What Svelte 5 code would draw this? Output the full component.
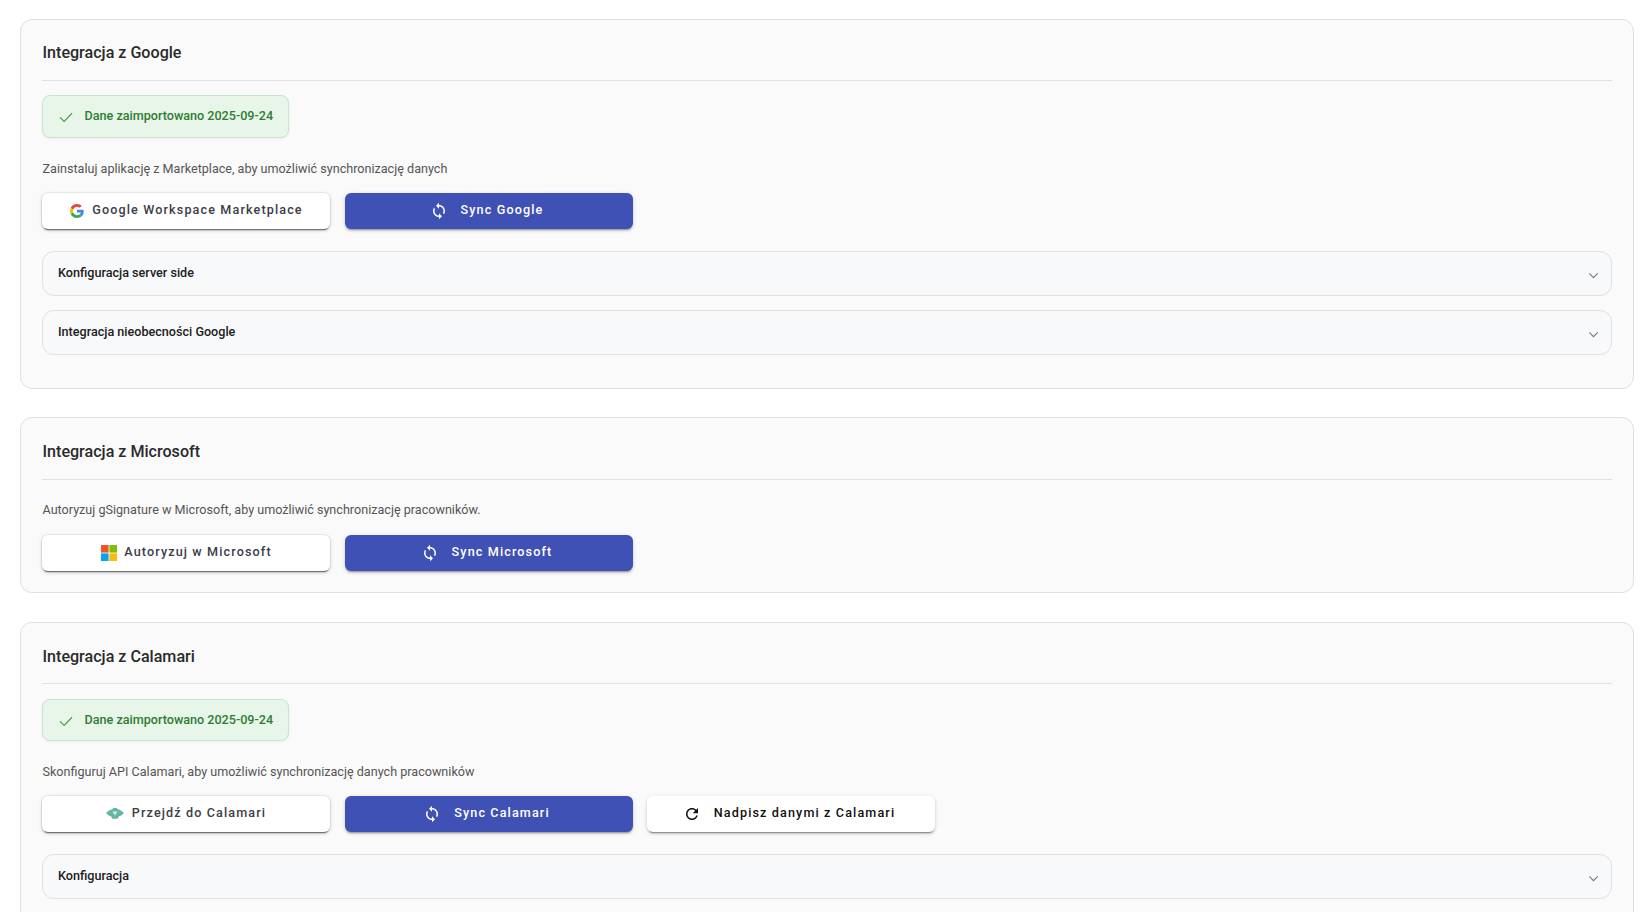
<script>
  const syncPath = "M12 4V1L8 5l4 4V6c3.31 0 6 2.69 6 6 0 1.01-.25 1.97-.7 2.8l1.46 1.46C19.54 15.03 20 13.57 20 12c0-4.42-3.58-8-8-8zm0 14c-3.31 0-6-2.69-6-6 0-1.01.25-1.97.7-2.8L5.24 7.74C4.46 8.97 4 10.43 4 12c0 4.42 3.58 8 8 8v3l4-4-4-4v3z";
  const refreshPath = "M17.65 6.35C16.2 4.9 14.21 4 12 4c-4.42 0-7.99 3.58-7.99 8s3.57 8 7.99 8c3.73 0 6.84-2.55 7.73-6h-2.08c-.82 2.33-3.04 4-5.65 4-3.31 0-6-2.69-6-6s2.69-6 6-6c1.66 0 3.14.69 4.22 1.78L13 11h7V4l-2.35 2.35z";
</script>

{#snippet alert()}
  <div class="alert">
    <svg class="check" viewBox="0 0 24 24" aria-hidden="true"><path d="M4 12.5l5.5 5.5L20 7" /></svg>
    <span>Dane zaimportowano 2025-09-24</span>
  </div>
{/snippet}

{#snippet accordion(label)}
  <div class="acc">
    <span>{label}</span>
    <svg class="chev" viewBox="0 0 24 24" aria-hidden="true"><path d="M6 9l6 6 6-6" /></svg>
  </div>
{/snippet}

{#snippet syncBtn(label)}
  <button class="btn primary">
    <svg class="mi" viewBox="0 0 24 24" aria-hidden="true"><path d={syncPath} /></svg>
    <span>{label}</span>
  </button>
{/snippet}

<main class="page">
  <section class="card first">
    <h2>Integracja z Google</h2>
    <div class="body">
      {@render alert()}
      <p>Zainstaluj aplikację z Marketplace, aby umożliwić synchronizację danych</p>
      <div class="row">
        <button class="btn google">
          <svg class="logo" viewBox="0 0 48 48" aria-hidden="true">
            <path fill="#EA4335" d="M24 9.5c3.54 0 6.71 1.22 9.21 3.6l6.85-6.85C35.9 2.38 30.47 0 24 0 14.62 0 6.51 5.38 2.56 13.22l7.98 6.19C12.43 13.72 17.74 9.5 24 9.5z"/>
            <path fill="#4285F4" d="M46.98 24.55c0-1.57-.15-3.09-.38-4.55H24v9.02h12.94c-.58 2.96-2.26 5.48-4.78 7.18l7.73 6c4.51-4.18 7.09-10.36 7.09-17.65z"/>
            <path fill="#FBBC05" d="M10.53 28.59c-.48-1.45-.76-2.99-.76-4.59s.27-3.14.76-4.59l-7.98-6.19C.92 16.46 0 20.12 0 24c0 3.88.92 7.54 2.56 10.78l7.97-6.19z"/>
            <path fill="#34A853" d="M24 48c6.48 0 11.93-2.13 15.89-5.81l-7.73-6c-2.15 1.45-4.92 2.3-8.16 2.3-6.26 0-11.57-4.22-13.47-9.91l-7.98 6.19C6.51 42.62 14.62 48 24 48z"/>
          </svg>
          <span>Google Workspace Marketplace</span>
        </button>
        {@render syncBtn('Sync Google')}
      </div>
      <div class="accs">
        {@render accordion('Konfiguracja server side')}
        {@render accordion('Integracja nieobecności Google')}
      </div>
    </div>
  </section>

  <section class="card compact">
    <h2>Integracja z Microsoft</h2>
    <div class="body">
      <p class="lead">Autoryzuj gSignature w Microsoft, aby umożliwić synchronizację pracowników.</p>
      <div class="row">
        <button class="btn">
          <svg class="logo ms" viewBox="0 0 16 16" aria-hidden="true">
            <rect width="7.6" height="7.6" fill="#F35325"/>
            <rect x="8.4" width="7.6" height="7.6" fill="#81BC06"/>
            <rect y="8.4" width="7.6" height="7.6" fill="#05A6F0"/>
            <rect x="8.4" y="8.4" width="7.6" height="7.6" fill="#FFBA08"/>
          </svg>
          <span>Autoryzuj w Microsoft</span>
        </button>
        {@render syncBtn('Sync Microsoft')}
      </div>
    </div>
  </section>

  <section class="card last">
    <h2>Integracja z Calamari</h2>
    <div class="body">
      {@render alert()}
      <p>Skonfiguruj API Calamari, aby umożliwić synchronizację danych pracowników</p>
      <div class="row">
        <button class="btn">
          <svg class="logo cal" viewBox="0 0 18 11" aria-hidden="true">
            <path fill="#62B8A4" d="M0 5 3 2.4 6 1.2 7.5 0h3L12 1.2l3 1.2L18 5l-2.6 2.4-2.4.8-1.5 2.6h-5L5 8.2l-2.4-.8z"/>
            <path fill="#CFEAE3" d="M6.4 3.6h5.2L9 7.4z"/>
          </svg>
          <span>Przejdź do Calamari</span>
        </button>
        {@render syncBtn('Sync Calamari')}
        <button class="btn dark">
          <svg class="mi" viewBox="0 0 24 24" aria-hidden="true"><path d={refreshPath} /></svg>
          <span>Nadpisz danymi z Calamari</span>
        </button>
      </div>
      <div class="accs">
        {@render accordion('Konfiguracja')}
      </div>
    </div>
  </section>
</main>

<style>
  :global(html), :global(body) {
    margin: 0;
    background: #fff;
    overflow: hidden;
    height: 912px;
  }
  .page {
    padding: 19px 17px 0 20px;
    display: flex;
    flex-direction: column;
    gap: 29px;
    height: 893px;
    overflow: hidden;
    font-family: Roboto, "Liberation Sans", sans-serif;
    color: #212121;
  }
  .card {
    flex: none;
    background: #fafafa;
    border: 1px solid #e0e0e0;
    border-radius: 12px;
    padding: 0 21px 33px;
  }
  .card.first { margin-bottom: -1px; }
  .card.compact { padding-bottom: 21px; }
  .card.last { padding-bottom: 60px; }
  h2 {
    margin: 0;
    height: 60px;
    line-height: 65px;
    text-indent: .5px;
    font-size: 16.1px;
    font-weight: 500;
    color: #2a2a2a;
    border-bottom: 1px solid #e0e0e0;
  }
  .compact h2 { height: 61px; line-height: 67px; }
  .last h2 { line-height: 67px; }
  .body { display: flex; flex-direction: column; align-items: stretch; }
  .alert {
    align-self: flex-start;
    box-sizing: border-box;
    margin-top: 14px;
    width: 247px;
    height: 43px;
    display: flex;
    align-items: center;
    gap: 9.5px;
    padding: 0 0 2px 14px;
    white-space: nowrap;
    background: #e8f5e9;
    border: 1px solid #c8e6c9;
    border-radius: 8px;
    box-shadow: 0 1px 3px rgba(0, 0, 0, .06);
    color: #2e7d32;
    font-size: 12.6px;
    font-weight: 500;
  }
  .last .alert { margin-top: 15px; height: 42px; }
  .check { width: 18px; height: 18px; flex: none; margin-top: 3px; fill: none; stroke: #43a047; stroke-width: 1.5; }
  p {
    margin: 22px 0 0;
    line-height: 18px;
    text-indent: .5px;
    font-size: 12.6px;
    color: #555;
  }
  p.lead { margin-top: 21px; }
  .row { display: flex; gap: 15px; margin-top: 15px; }
  .compact .row { margin-top: 16px; }
  .btn {
    box-sizing: border-box;
    width: 288px;
    height: 36px;
    display: flex;
    align-items: center;
    justify-content: center;
    gap: 8px;
    padding: 0 0 3px;
    border: none;
    border-radius: 6px;
    background: #fff;
    color: #3c3c4a;
    font: 500 12.6px/16px Roboto, sans-serif;
    letter-spacing: 1.125px;
    box-shadow: 0 3px 1px -2px rgba(0,0,0,.45), 0 0 0 1px rgba(0,0,0,.05), 0 2px 2px 0 rgba(0,0,0,.14), 0 1px 5px 0 rgba(0,0,0,.12);
  }
  .btn.google { padding-left: 1px; }
  .btn.primary { background: #3f51b5; color: #fff; gap: 13px; padding-right: 5px; box-shadow: 0 3px 1px -2px rgba(0,0,0,.2), 0 2px 2px 0 rgba(0,0,0,.14), 0 1px 5px 0 rgba(0,0,0,.12); }
  .btn.dark { color: #111; gap: 13px; padding-right: 4px; margin-left: -1px; box-shadow: 0 3px 1px -2px rgba(0,0,0,.3), 0 2px 2px 0 rgba(0,0,0,.14), 0 1px 5px 0 rgba(0,0,0,.12); }
  .mi { width: 18px; height: 18px; fill: currentColor; flex: none; margin-top: 3px; }
  .logo { width: 14px; height: 14px; flex: none; margin-top: 2px; }
  .logo.ms { width: 16px; height: 16px; margin-right: -1px; margin-left: 1px; }
  .logo.cal { width: 18px; height: 11px; }
  .accs { display: flex; flex-direction: column; gap: 14px; margin-top: 22px; }
  .acc {
    box-sizing: border-box;
    height: 45px;
    display: flex;
    align-items: center;
    justify-content: space-between;
    padding: 0 9px 2px 15px;
    background: #f8f9fa;
    border: 1px solid #e0e0e0;
    border-radius: 12px;
    font-size: 12.6px;
    font-weight: 500;
    color: #212121;
  }
  .chev { width: 17px; height: 17px; margin-top: 6px; fill: none; stroke: #777; stroke-width: 1.5; }
</style>
